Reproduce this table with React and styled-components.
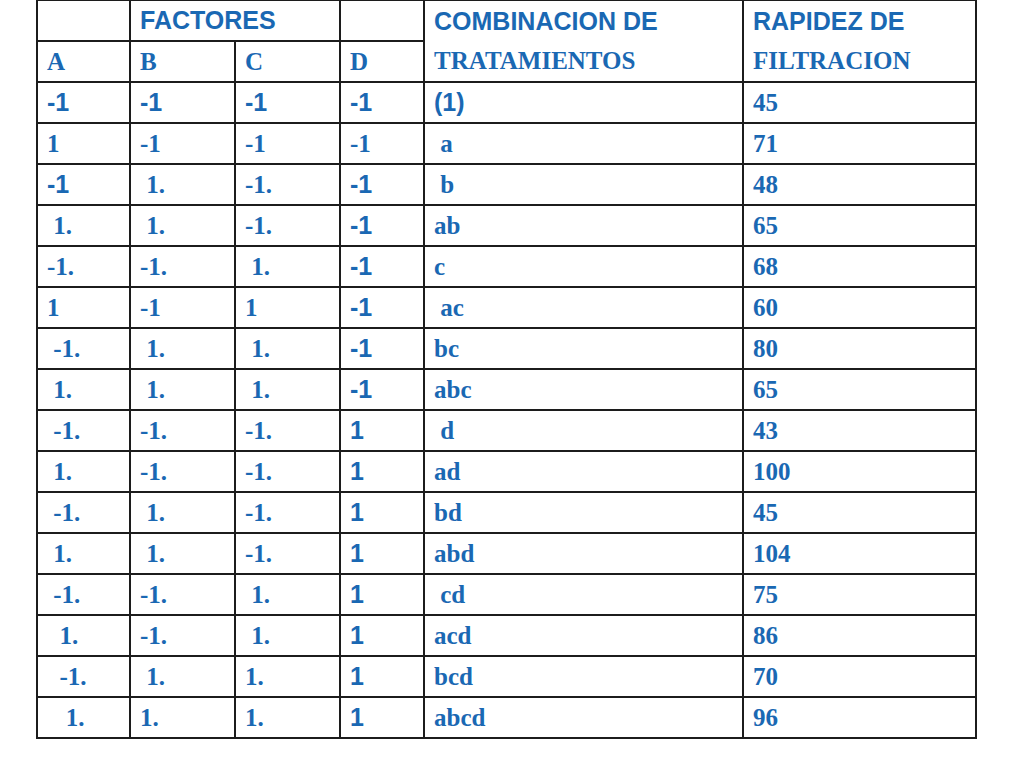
import React from "react";
import styled, { createGlobalStyle } from "styled-components";

const GlobalStyle = createGlobalStyle`
  html, body {
    margin: 0;
    padding: 0;
    background: #ffffff;
  }
`;

const Page = styled.div`
  width: 1024px;
  height: 768px;
  padding-left: 36px;
  box-sizing: border-box;
  background: #ffffff;
`;

const Table = styled.table`
  border-collapse: collapse;
  table-layout: fixed;
  width: 939px;
  margin-top: -1px;
  color: #1a68b3;
  font-weight: bold;
  font-size: 25px;
`;

const fontFor = (p) =>
  p.sans ? '"Liberation Sans", Arial, sans-serif' : '"Liberation Serif", "Times New Roman", serif';

const Cell = styled.td`
  border: 2px solid #1c1c1c;
  height: 41px;
  padding: 0 0 0 9px;
  box-sizing: border-box;
  white-space: pre;
  line-height: 39px;
  vertical-align: middle;
  font-family: ${fontFor};
`;

const HeadCell = styled(Cell)`
  vertical-align: top;
`;

const HeadLine = styled.div`
  height: 40px;
  line-height: 40px;
  font-family: ${fontFor};
`;

const S = (text) => ({ text, sans: true });

const rows = [
  [S("-1"), S("-1"), S("-1"), S("-1"), S("(1)"), "45"],
  ["1", "-1", "-1", "-1", " a", "71"],
  [S("-1"), " 1.", "-1.", S("-1"), " b", "48"],
  [" 1.", " 1.", "-1.", S("-1"), "ab", "65"],
  ["-1.", "-1.", " 1.", S("-1"), "c", "68"],
  ["1", "-1", "1", S("-1"), " ac", "60"],
  [" -1.", " 1.", " 1.", S("-1"), "bc", "80"],
  [" 1.", " 1.", " 1.", S("-1"), "abc", "65"],
  [" -1.", "-1.", "-1.", S("1"), " d", "43"],
  [" 1.", "-1.", "-1.", S("1"), "ad", "100"],
  [" -1.", " 1.", "-1.", S("1"), "bd", "45"],
  [" 1.", " 1.", "-1.", S("1"), "abd", "104"],
  [" -1.", "-1.", " 1.", S("1"), " cd", "75"],
  ["  1.", "-1.", " 1.", S("1"), "acd", "86"],
  ["  -1.", " 1.", "1.", S("1"), "bcd", "70"],
  ["   1.", "1.", "1.", S("1"), "abcd", "96"],
];

const widths = [93, 105, 105, 84, 319, 233];

export default function App() {
  return (
    <Page>
      <GlobalStyle />
      <Table>
        <colgroup>
          {widths.map((w, i) => (
            <col key={i} style={{ width: w }} />
          ))}
        </colgroup>
        <tbody>
          <tr>
            <Cell />
            <Cell sans colSpan={2}>FACTORES</Cell>
            <Cell />
            <HeadCell rowSpan={2}>
              <HeadLine sans>COMBINACION DE</HeadLine>
              <HeadLine>TRATAMIENTOS</HeadLine>
            </HeadCell>
            <HeadCell rowSpan={2}>
              <HeadLine sans>RAPIDEZ DE</HeadLine>
              <HeadLine>FILTRACION</HeadLine>
            </HeadCell>
          </tr>
          <tr>
            <Cell>A</Cell>
            <Cell>B</Cell>
            <Cell>C</Cell>
            <Cell>D</Cell>
          </tr>
          {rows.map((row, r) => (
            <tr key={r}>
              {row.map((c, i) => {
                const item = typeof c === "string" ? { text: c, sans: false } : c;
                return (
                  <Cell key={i} sans={item.sans}>
                    {item.text}
                  </Cell>
                );
              })}
            </tr>
          ))}
        </tbody>
      </Table>
    </Page>
  );
}
